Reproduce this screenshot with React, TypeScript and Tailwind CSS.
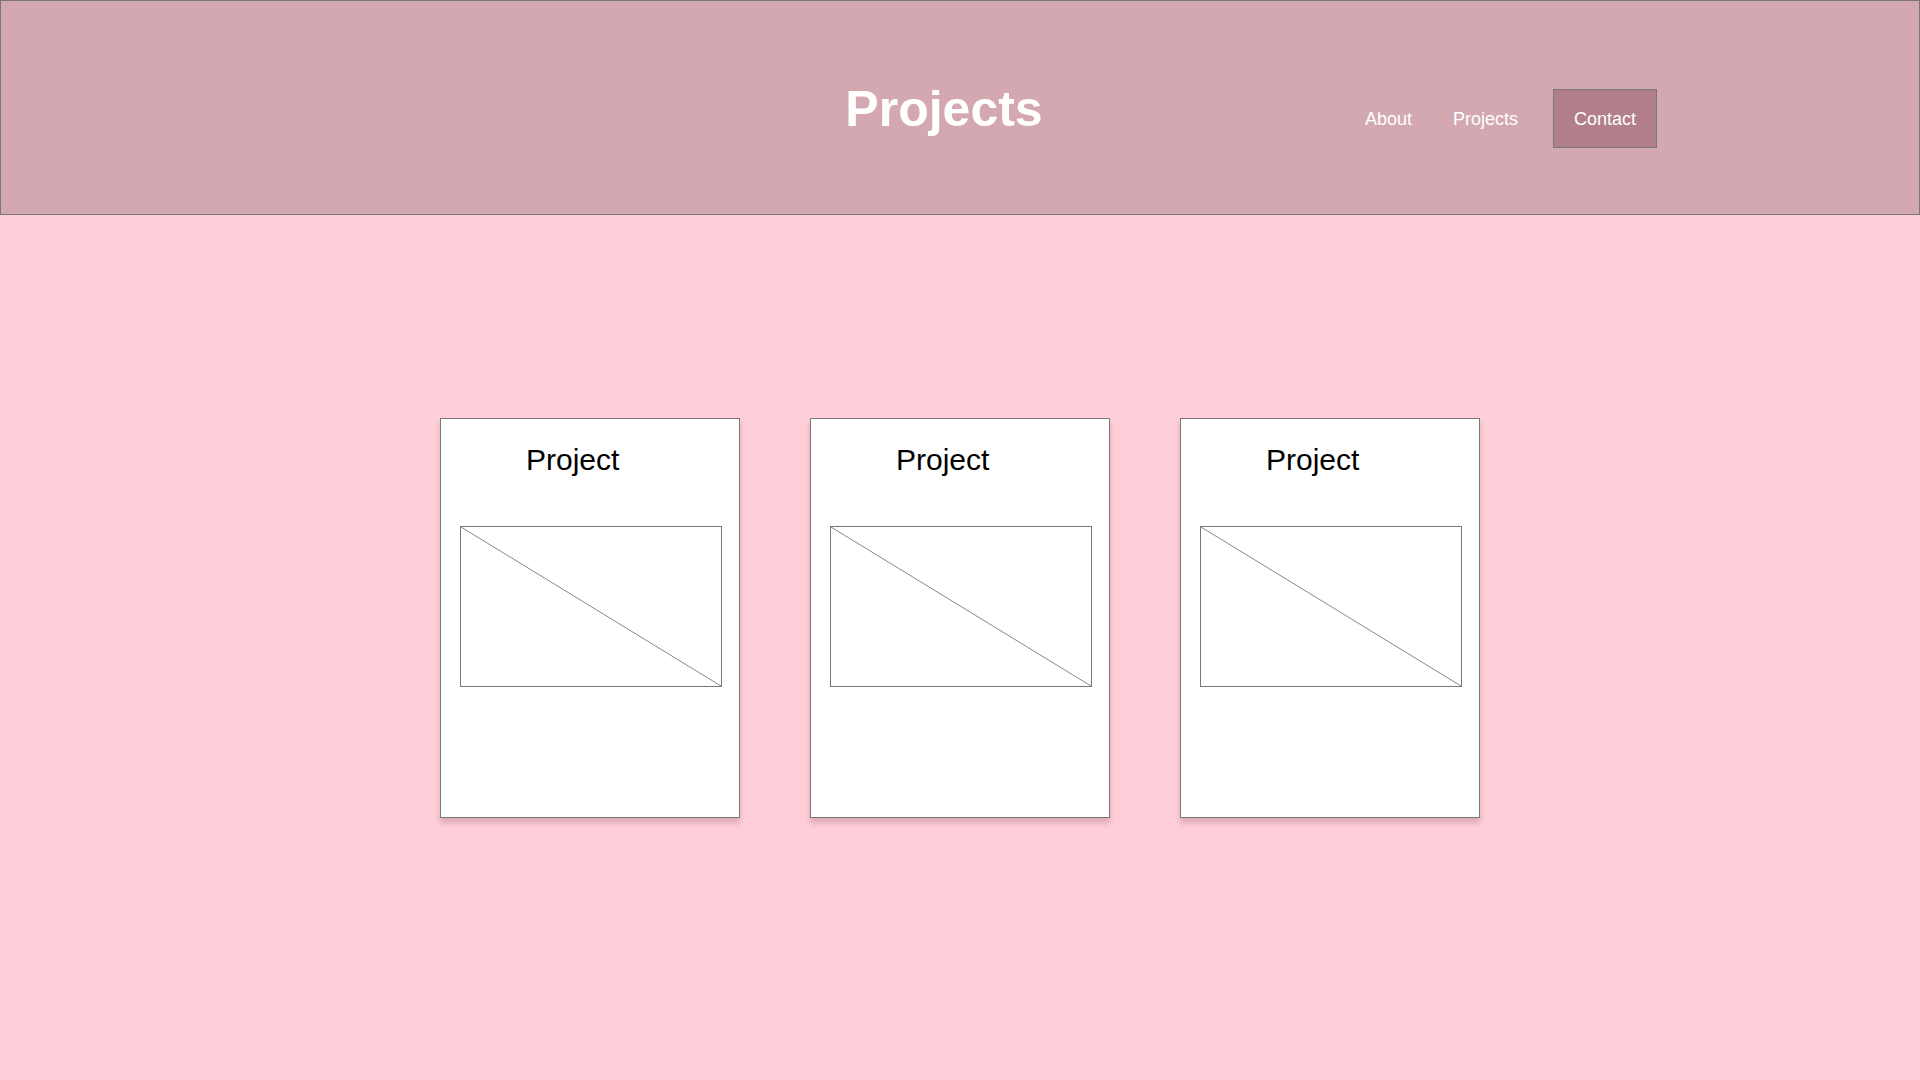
import React from 'react';

const projects = ['Project', 'Project', 'Project'];

// Placeholder picture: box with one diagonal stroke
function ImagePlaceholder() {
  return (
    <div className="relative ml-[19px] mt-[51px] h-[161px] w-[262px] border border-[#777]">
      <svg className="absolute inset-0 h-full w-full" viewBox="0 0 100 100" preserveAspectRatio="none">
        <line x1="0" y1="0" x2="100" y2="100" stroke="#888" strokeWidth="1" vectorEffect="non-scaling-stroke" />
      </svg>
    </div>
  );
}

function ProjectCard({ title }: { title: string }) {
  return (
    <div className="flex h-[400px] w-[300px] flex-col border border-[#777] bg-white pt-[26px] shadow-[0_5px_6px_rgba(120,60,70,0.25)]">
      <h2 className="pl-[85px] text-[30px] leading-[30px] text-black">{title}</h2>
      <ImagePlaceholder />
    </div>
  );
}

export default function App() {
  return (
    <div className="min-h-screen bg-[#ffcfd9] font-['Liberation_Sans',Arial,sans-serif]">
      {/* Header */}
      <header className="flex h-[215px] items-start border border-[#777] bg-[#d3a8b1]">
        <h1 className="ml-[842px] mt-[84px] w-[202px] text-center text-[50px] font-bold leading-[48px] text-white">
          Projects
        </h1>
        <nav className="ml-[320px] mt-[88px] flex items-center text-[18px] leading-[18px] text-white">
          <a className="w-[48px]">About</a>
          <a className="ml-[40px] w-[65px]">Projects</a>
          <a className="ml-[35px] flex h-[59px] w-[104px] items-center justify-center border border-[#777] bg-[#b07f89]">
            Contact
          </a>
        </nav>
      </header>

      {/* Cards */}
      <main className="flex justify-center gap-[70px] pt-[203px]">
        {projects.map((p, i) => (
          <ProjectCard key={i} title={p} />
        ))}
      </main>
    </div>
  );
}
